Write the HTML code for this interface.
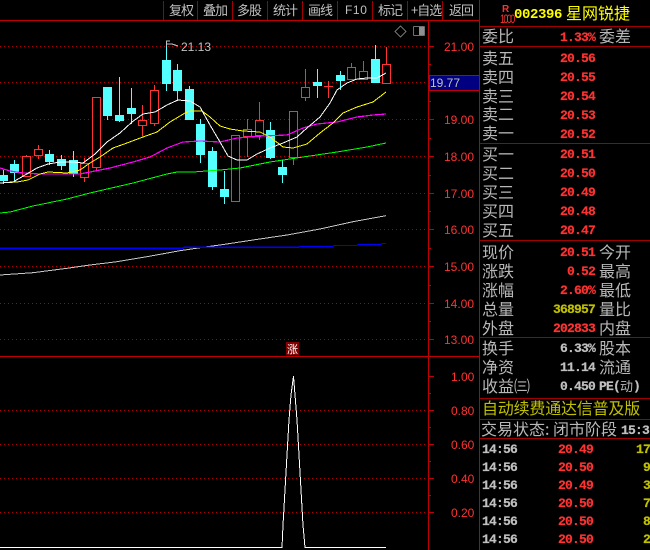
<!DOCTYPE html>
<html><head><meta charset="utf-8"><style>
html,body{margin:0;padding:0;background:#000;width:650px;height:550px;overflow:hidden}
svg{display:block;shape-rendering:crispEdges}
text{font-family:"WenQuanYi Zen Hei","Noto Sans CJK SC",sans-serif;font-size:16px;fill:#b8b8b8}
.ax{font-family:"Liberation Sans",sans-serif;font-size:12px;fill:#ff3232}
.tb{font-size:13px;letter-spacing:-1px;fill:#c0c0c0}
.n{font-family:"Liberation Mono",monospace;font-weight:bold;font-size:13px;letter-spacing:-.8px;fill:#ff3232;stroke:#ff3232;stroke-width:.2;text-anchor:end}
.gn{fill:#c0c0c0;stroke:#c0c0c0}
.yn{fill:#c0c000;stroke:#c0c000}
.ns{font-family:"Liberation Mono",monospace;font-weight:bold;font-size:13px;letter-spacing:-.8px;fill:#c0c0c0;stroke:#c0c0c0;stroke-width:.2}
</style></head><body>
<svg width="650" height="550" viewBox="0 0 650 550" xmlns="http://www.w3.org/2000/svg">
<rect width="650" height="550" fill="#000"/>
<!-- toolbar -->
<path d="M163.5 1V20M197.5 1V20M232.5 1V20M267.5 1V20M302.5 1V20M337.5 1V20M372.5 1V20M407.5 1V20M442.5 1V20" stroke="#a00000"/>
<path d="M0 20.5H479" stroke="#c00000"/>
<text class="tb" x="169" y="15">复权</text><text class="tb" x="203" y="15">叠加</text><text class="tb" x="237" y="15">多股</text><text class="tb" x="273" y="15">统计</text><text class="tb" x="308" y="15">画线</text>
<text x="345" y="14" style="font:12px 'Liberation Sans';letter-spacing:.6px;fill:#c0c0c0">F10</text>
<text class="tb" x="378" y="15">标记</text><text class="tb" x="411" y="15">+自选</text><text class="tb" x="449" y="15">返回</text>
<!-- grid -->
<path d="M0 46.5H428M0 82.5H428M0 119.5H428M0 156.5H428M0 193.5H428M0 229.5H428M0 266.5H428M0 303.5H428M0 339.5H428M0 410.5H428M0 444.5H428M0 478.5H428M0 512.5H428" stroke="#b00000" stroke-dasharray="1 3"/>
<!-- dividers -->
<path d="M0 356.5H479" stroke="#c00000"/>
<path d="M428.5 20V550M479.5 0V550" stroke="#c00000"/>
<!-- ticks -->
<path d="M428 46.5h6M428 119.5h6M428 156.5h6M428 193.5h6M428 229.5h6M428 266.5h6M428 303.5h6M428 339.5h6M428 376.5h6M428 410.5h6M428 444.5h6M428 478.5h6M428 512.5h6M428 64.5h3M428 101.5h3M428 138.5h3M428 175.5h3M428 211.5h3M428 248.5h3M428 285.5h3M428 321.5h3M428 393.5h3M428 427.5h3M428 461.5h3M428 495.5h3" stroke="#c00000"/>
<!-- axis labels -->
<text class="ax" x="444" y="51">21.00</text>
<text class="ax" x="444" y="124">19.00</text>
<text class="ax" x="444" y="161">18.00</text>
<text class="ax" x="444" y="198">17.00</text>
<text class="ax" x="444" y="234">16.00</text>
<text class="ax" x="444" y="271">15.00</text>
<text class="ax" x="444" y="308">14.00</text>
<text class="ax" x="444" y="344">13.00</text>
<text class="ax" x="451" y="381">1.00</text>
<text class="ax" x="451" y="415">0.80</text>
<text class="ax" x="451" y="449">0.60</text>
<text class="ax" x="451" y="483">0.40</text>
<text class="ax" x="451" y="517">0.20</text>
<rect x="429.5" y="75.5" width="50" height="15" fill="#000080" stroke="#c00000"/>
<text x="430" y="87" style="font:12px 'Liberation Sans';fill:#c0c0c0">19.77</text>
<!-- icons -->
<path d="M400.5 26L406 31.5L400.5 37L395 31.5Z" fill="none" stroke="#707070"/>
<rect x="413.5" y="26.5" width="11" height="9" rx="1" fill="none" stroke="#707070"/>
<rect x="419" y="27" width="5" height="8" fill="#909090"/>
<!-- cyan candles -->
<g fill="#54ffff">
<rect x="0" y="175" width="8" height="6"/><rect x="10" y="164" width="9" height="9"/><rect x="45" y="154" width="9" height="8"/><rect x="57" y="159" width="9" height="7"/><rect x="69" y="160" width="9" height="14"/><rect x="103" y="87" width="9" height="29"/><rect x="115" y="115" width="9" height="6"/><rect x="127" y="108" width="9" height="6"/><rect x="162" y="60" width="9" height="24"/><rect x="173" y="70" width="9" height="21"/><rect x="185" y="89" width="9" height="31"/><rect x="196" y="124" width="9" height="31"/><rect x="208" y="151" width="9" height="36"/><rect x="220" y="189" width="9" height="8"/><rect x="266" y="130" width="9" height="28"/><rect x="278" y="167" width="9" height="8"/><rect x="313" y="82" width="9" height="4"/><rect x="336" y="75" width="9" height="6"/><rect x="371" y="59" width="9" height="24"/>
</g>
<path d="M3.5 170V184M14.5 160V181M49.5 150V165M61.5 155V170M73.5 151V177M107.5 116V120M119.5 77V122M131.5 88V124M166.5 43V91M177.5 64V101M189.5 86V90M200.5 119V163M212.5 147V190M224.5 171V204M270.5 122V159M282.5 160V183M317.5 69V98M340.5 71V90M375.5 45V60" stroke="#54ffff" fill="none"/>
<!-- red candles -->
<g fill="#000" stroke="#ff3232">
<rect x="22.5" y="156.5" width="8" height="20"/><rect x="34.5" y="149.5" width="8" height="6"/><rect x="80.5" y="163.5" width="8" height="14"/><rect x="92.5" y="97.5" width="8" height="70"/><rect x="138.5" y="120.5" width="8" height="5"/><rect x="150.5" y="90.5" width="8" height="33"/><rect x="231.5" y="135.5" width="8" height="66"/><rect x="243.5" y="129.5" width="8" height="7"/><rect x="255.5" y="120.5" width="8" height="15"/><rect x="289.5" y="111.5" width="8" height="46"/><rect x="301.5" y="87.5" width="8" height="10"/><rect x="347.5" y="67.5" width="8" height="12"/><rect x="359.5" y="71.5" width="8" height="8"/><rect x="382.5" y="64.5" width="8" height="19"/>
</g>
<path d="M26.5 155V156M38.5 145V149M38.5 156V159M84.5 158V163M84.5 178V182M96.5 168V170M142.5 105V120M142.5 126V136M154.5 85V90M154.5 124V126M247.5 119V129M247.5 137V157M259.5 102V120M259.5 136V140M293.5 158V165M305.5 69V87M305.5 98V101M328.5 81V98M324 86.5H333M351.5 63V67M363.5 61V71M386.5 47V64" stroke="#ff3232" fill="none"/>
<!-- MA lines -->
<g fill="none" stroke-width="1">
<polyline stroke="#c8c8c8" points="0,275 33,272.7 67,268.3 90,265 117,261.7 147,256.7 180,250.7 207,246.7 220,245 253,240 287,235 320,229 353,221.7 386,215.7"/>
<polyline stroke="#0000ff" stroke-width="1.4" points="0,248.3 183,248.3 184,247.3 299,247.3 300,246.5 333,246.5 334,245.5 357,245.5 358,244.5 381,244.5 382,243.5 386,243.5"/>
<polyline stroke="#00ff00" points="0,213 10,212 33,206 67,199 90,193 133,183 167,174 177,172 193,172 220,170 240,168 270,162 303,157 337,152 367,147 386,143"/>
<polyline stroke="#ff00ff" stroke-width="1.2" points="0,168 10,171 23,173 40,174 80,174 90,172 110,168 133,162 150,157 167,148 183,142 200,141 220,142 237,138 263,136 287,135 303,128 317,124 337,122 357,117 373,115 386,114"/>
<polyline stroke="#ffff00" points="0,183 17,182 28,180 40,174 48,172 67,173 80,170 90,163 100,157 113,148 127,143 143,137 157,132 170,122 185,113 190,111 202,111 210,117 220,126 230,129 243,131 260,132 270,137 283,147 293,148 307,144 320,133 333,123 343,113 357,107 373,102 386,92"/>
<polyline stroke="#ffffff" points="0,183 13,182 25,175 37,168 48,164 60,162 72,162 83,163 95,154 107,142 120,133 132,122 143,114 155,112 167,105 178,100 190,101 200,107 210,125 220,142 228,156 237,160 247,160 257,154 270,148 283,143 297,137 307,128 320,117 330,103 337,90 347,83 357,79 367,78 377,78 386,73"/>
</g>
<!-- peak marker -->
<path d="M166.5 41V46M166 41H170M166 44H172L178 46" stroke="#c0c0c0" fill="none"/>
<text x="181" y="51" style="font:12px 'Liberation Sans';fill:#c0c0c0">21.13</text>
<!-- 涨 marker -->
<rect x="286" y="342" width="13" height="13" fill="#800000"/>
<text x="287" y="353" style="font-size:11px;fill:#fff">涨</text>
<!-- lower indicator -->
<polyline fill="none" stroke="#fff" points="0,547.5 282,547.5 283,525 285,490 287,455 289,420 291,395 293.5,376 295,395 297,420 299,455 301,490 303,525 305,547.5 386,547.5"/>
<!-- right panel lines -->
<path d="M480 26.5H650M480 46.5H650M480 143.5H650M480 240.5H650M480 337.5H650M480 398.5H650M480 419.5H650M480 438.5H650" stroke="#a00000"/>
<!-- header -->
<text x="502" y="12" style="font:bold 10px 'Liberation Sans';fill:#ff3232">R</text>
<text transform="translate(500,23) scale(1,1.3)" style="font:9px 'Liberation Sans';fill:#ff3232;letter-spacing:-1.6px">1000</text>
<text x="514" y="18" style="font:bold 14px 'Liberation Mono';fill:#ffff00;letter-spacing:-.4px">002396</text>
<text x="566" y="19" style="fill:#ffff00">星网锐捷</text>
<!-- 委比 -->
<text x="482" y="42">委比</text><text class="n" x="595" y="41">1.33%</text><text x="599" y="42">委差</text>
<!-- sell -->
<text x="482" y="64">卖五</text><text class="n" x="595" y="62">20.56</text>
<text x="482" y="83">卖四</text><text class="n" x="595" y="81">20.55</text>
<text x="482" y="102">卖三</text><text class="n" x="595" y="100">20.54</text>
<text x="482" y="120">卖二</text><text class="n" x="595" y="119">20.53</text>
<text x="482" y="139">卖一</text><text class="n" x="595" y="138">20.52</text>
<!-- buy -->
<text x="482" y="160">买一</text><text class="n" x="595" y="158">20.51</text>
<text x="482" y="179">买二</text><text class="n" x="595" y="177">20.50</text>
<text x="482" y="198">买三</text><text class="n" x="595" y="196">20.49</text>
<text x="482" y="217">买四</text><text class="n" x="595" y="215">20.48</text>
<text x="482" y="236">买五</text><text class="n" x="595" y="234">20.47</text>
<!-- quotes -->
<text x="482" y="258">现价</text><text class="n" x="595" y="256">20.51</text><text x="599" y="258">今开</text>
<text x="482" y="277">涨跌</text><text class="n" x="595" y="275">0.52</text><text x="599" y="277">最高</text>
<text x="482" y="296">涨幅</text><text class="n" x="595" y="294">2.60%</text><text x="599" y="296">最低</text>
<text x="482" y="315">总量</text><text class="n yn" x="595" y="313">368957</text><text x="599" y="315">量比</text>
<text x="482" y="334">外盘</text><text class="n" x="595" y="332">202833</text><text x="599" y="334">内盘</text>
<text x="482" y="354">换手</text><text class="n gn" x="595" y="352">6.33%</text><text x="599" y="354">股本</text>
<text x="482" y="373">净资</text><text class="n gn" x="595" y="371">11.14</text><text x="599" y="373">流通</text>
<text x="482" y="392">收益㈢</text><text class="n gn" x="595" y="390">0.450</text>
<text x="599" y="390" class="ns">PE(</text><text x="620" y="391" style="font-size:13px">动</text><text x="633" y="390" class="ns">)</text>
<!-- notices -->
<text x="482" y="414" style="fill:#c0c000;letter-spacing:-.2px">自动续费通达信普及版</text>
<text x="481" y="435">交易状态:</text><text x="553" y="435">闭市阶段</text>
<text x="621" y="434" class="ns">15:3</text>
<!-- trades -->
<text x="482" y="453" class="ns">14:56</text><text class="n" x="593" y="453">20.49</text><text x="650" y="453" class="n yn">17</text>
<text x="482" y="471" class="ns">14:56</text><text class="n" x="593" y="471">20.50</text><text x="650" y="471" class="n yn">9</text>
<text x="482" y="489" class="ns">14:56</text><text class="n" x="593" y="489">20.49</text><text x="650" y="489" class="n yn">3</text>
<text x="482" y="507" class="ns">14:56</text><text class="n" x="593" y="507">20.50</text><text x="650" y="507" class="n yn">7</text>
<text x="482" y="525" class="ns">14:56</text><text class="n" x="593" y="525">20.50</text><text x="650" y="525" class="n yn">8</text>
<text x="482" y="543" class="ns">14:56</text><text class="n" x="593" y="543">20.50</text><text x="650" y="543" class="n yn">2</text>
</svg>
</body></html>
